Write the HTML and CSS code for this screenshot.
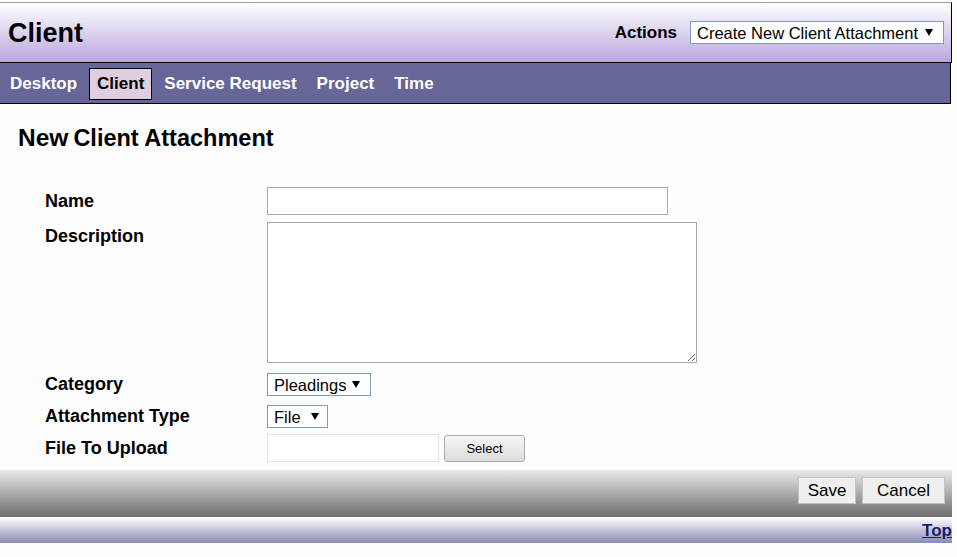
FILE: index.html
```html
<!DOCTYPE html>
<html lang="en">
<head>
<meta charset="utf-8">
<title>New Client Attachment</title>
<link rel="stylesheet" href="styles.css">
</head>
<body>
<div class="page">
  <header class="header">
    <h1 class="title">Client</h1>
    <div class="actions">
      <span class="actions-label">Actions</span>
      <span class="select select-actions">Create New Client Attachment</span>
    </div>
  </header>
  <nav class="nav">
    <a class="nav-item">Desktop</a>
    <a class="nav-item active">Client</a>
    <a class="nav-item">Service Request</a>
    <a class="nav-item">Project</a>
    <a class="nav-item">Time</a>
  </nav>
  <main class="main">
    <h2 class="heading"><span class="heading-new">New</span><span class="heading-name">Client Attachment</span></h2>
    <form class="form">
      <div class="row row-name">
        <label class="label">Name</label>
        <input class="input-name" type="text">
      </div>
      <div class="row row-desc">
        <label class="label label-top">Description</label>
        <textarea class="textarea"></textarea>
      </div>
      <div class="row row-cat">
        <label class="label">Category</label>
        <div><span class="select select-cat">Pleadings</span></div>
      </div>
      <div class="row row-type">
        <label class="label">Attachment Type</label>
        <div><span class="select select-type">File</span></div>
      </div>
      <div class="row row-file">
        <label class="label">File To Upload</label>
        <div class="file">
          <span class="file-box"></span>
          <button type="button" class="file-btn">Select</button>
        </div>
      </div>
    </form>
  </main>
  <div class="button-bar">
    <button type="button" class="btn btn-save">Save</button>
    <button type="button" class="btn btn-cancel">Cancel</button>
  </div>
  <div class="bottom-bar">
    <a class="top-link" href="#">Top</a>
  </div>
</div>
</body>
</html>
```

FILE: styles.css
```css
* { box-sizing: border-box; }
html, body { margin: 0; padding: 0; }
body {
  background: #fdfdfd;
  font-family: "Liberation Sans", Arial, sans-serif;
  color: #000;
  padding-top: 2px;
}
.page { width: 952px; }

.header {
  height: 61px;
  border-top: 1px solid #9c9c9c;
  border-bottom: 1px solid #000;
  border-right: 1px solid #000;
  background: linear-gradient(#ffffff, #b9a6dd);
  display: flex;
  align-items: center;
  justify-content: space-between;
  padding: 0 7px 0 8px;
}
.title {
  margin: 0;
  font-size: 27px;
  font-weight: bold;
  line-height: 30px;
}
.actions { display: flex; align-items: center; gap: 13px; }
.actions-label { font-size: 17px; font-weight: bold; margin-top: 1px; }

.select {
  display: inline-flex;
  align-items: center;
  justify-content: space-between;
  gap: 5px;
  white-space: nowrap;
  height: 23px;
  border: 1px solid #7f9db9;
  background: #fff;
  font-size: 16.5px;
  padding: 0 10px 0 6px;
  line-height: 20px;
}
.select::after {
  content: "";
  display: block;
  flex: none;
  width: 0;
  height: 0;
  border-left: 4px solid transparent;
  border-right: 4px solid transparent;
  border-top: 7px solid #000;
}
.select-actions { width: 254px; }
.select-cat { width: 104px; }
.select-type { width: 61px; padding-right: 8px; }

.nav {
  width: 951px;
  height: 41px;
  background: #666699;
  border-bottom: 1px solid #000;
  border-right: 1px solid #000;
  display: flex;
  align-items: center;
  gap: 4px;
  padding: 1px 0 0 2px;
}
.nav-item {
  height: 32px;
  padding: 0 7px;
  border: 1px solid transparent;
  color: #fff;
  font-size: 17px;
  font-weight: bold;
  display: flex;
  align-items: center;
}
.nav-item.active {
  background: #dfcee0;
  border-color: #000;
  color: #000;
}

.main { padding: 20px 0 0 0; }
.heading {
  margin: 0 0 0 18px;
  display: flex;
  align-items: baseline;
  gap: 5px;
  line-height: 28px;
  font-weight: bold;
}
.heading-new { font-size: 24.5px; }
.heading-name { font-size: 23.5px; }

.form { margin-top: 35px; padding-left: 45px; }
.row {
  display: grid;
  grid-template-columns: 222px auto;
  align-items: center;
}
.label { font-size: 18px; font-weight: bold; line-height: 21px; }
.label-top { align-self: start; padding-top: 4px; }
.row-desc { margin-top: 7px; }
.row-cat { margin-top: 10px; }
.row-type { margin-top: 9px; }
.row-file { margin-top: 6px; }

.input-name {
  width: 401px;
  height: 28px;
  border: 1px solid #a9a9a9;
  background: #fff;
  margin: 0;
}
.textarea {
  width: 430px;
  height: 141px;
  border: 1px solid #a9a9a9;
  background: #fff;
  margin: 0;
  display: block;
}
.file { display: flex; align-items: center; gap: 5px; }
.file-box {
  width: 172px;
  height: 28px;
  border: 1px solid #e3e3e3;
  background: #fff;
}
.file-btn {
  width: 81px;
  height: 27px;
  border: 1px solid #acacac;
  border-radius: 3px;
  background: linear-gradient(#f6f6f6, #dcdcdc);
  font-family: "Liberation Sans", Arial, sans-serif;
  font-size: 13px;
  color: #000;
  padding: 0;
}

.button-bar {
  margin-top: 8px;
  height: 47px;
  background: linear-gradient(#e9e9e9, #6e6e6e);
  display: flex;
  justify-content: flex-end;
  align-items: flex-start;
  gap: 6px;
  padding: 7px 7px 0 0;
}
.btn {
  height: 27px;
  padding: 0;
  background: #efefef;
  border: 1px solid #c3c3c3;
  font-family: "Liberation Sans", Arial, sans-serif;
  font-size: 17px;
  color: #000;
}
.btn-save { width: 58px; }
.btn-cancel { width: 83px; }

.bottom-bar {
  height: 26px;
  background: linear-gradient(#ffffff, #8a8ab3);
  display: flex;
  justify-content: flex-end;
  align-items: center;
}
.top-link {
  font-size: 17px;
  font-weight: bold;
  color: #1c1c6c;
  text-decoration: underline;
  margin-top: 1px;
}
```
